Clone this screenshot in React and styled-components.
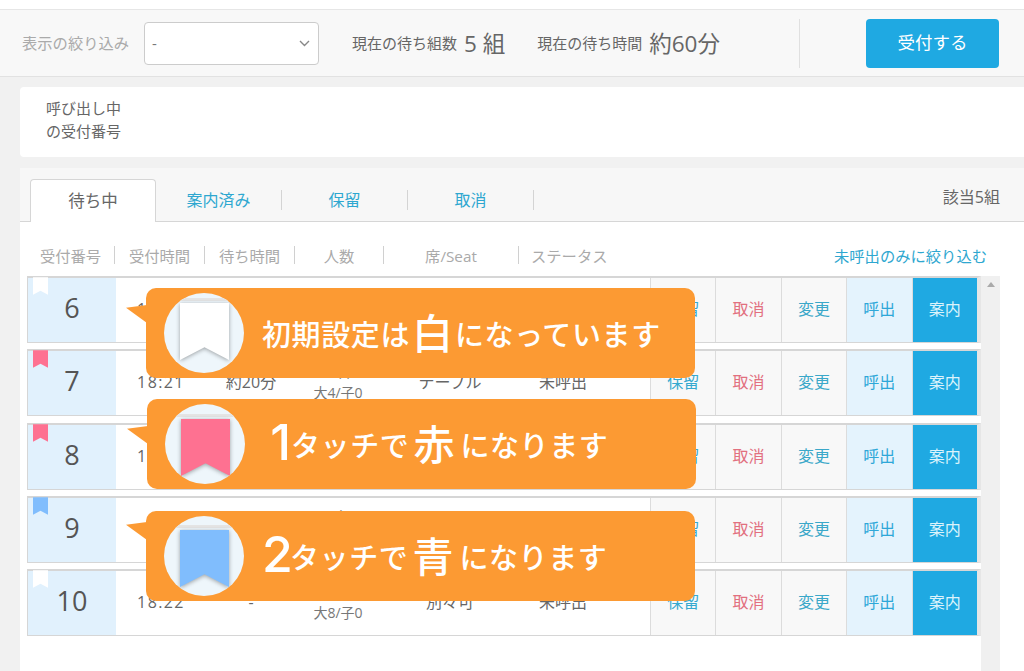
import React from "react";
import styled, { createGlobalStyle } from "styled-components";

const GlobalStyle = createGlobalStyle`
  html, body {
    margin: 0;
    padding: 0;
    background: #fff;
    height: 671px;
    overflow: hidden;
  }
  body {
    font-family: "Open Sans", "Noto Sans CJK JP", sans-serif;
    color: #666;
  }
`;

const Page = styled.div`
  position: relative;
  width: 1024px;
  height: 671px;
  padding-top: 9px;
  box-sizing: border-box;
  display: flex;
  flex-direction: column;
  overflow: hidden;
`;

const Toolbar = styled.div`
  height: 68px;
  flex: none;
  box-sizing: border-box;
  display: flex;
  align-items: center;
  padding-left: 22px;
  background: #f8f8f8;
  border-top: 1px solid #e6e6e6;
  border-bottom: 1px solid #e2e2e2;
`;

const FilterLabel = styled.span`
  font-size: 15.3px;
  color: #aaa;
  width: 122px;
  padding-bottom: 2px;
`;

const Select = styled.div`
  width: 175px;
  height: 43px;
  box-sizing: border-box;
  display: flex;
  align-items: center;
  justify-content: space-between;
  padding: 0 8px 0 7px;
  background: #fff;
  border: 1px solid #ccc;
  border-radius: 4px;
  font-size: 15px;
  color: #777;
`;

const Stat = styled.div`
  display: flex;
  align-items: center;
  margin-left: ${(p) => p.$left}px;
  padding-bottom: 2px;
  font-size: 15px;
  color: #666;
  b {
    font-weight: 400;
    font-size: 22.5px;
    margin-left: 7px;
  }
`;

const Divider = styled.div`
  width: 1px;
  height: 49px;
  background: #e0e0e0;
  margin-left: 79px;
`;

const AcceptButton = styled.button`
  width: 133px;
  height: 49px;
  margin-left: 66px;
  padding: 0 0 3px;
  border: 0;
  border-radius: 4px;
  background: #1fa9e2;
  color: #fff;
  font-family: inherit;
  font-size: 17.5px;
`;

const Body = styled.div`
  flex: 1;
  display: flex;
  flex-direction: column;
  padding: 10px 0 0 20px;
  background: #f1f1f1;
`;

const CallingCard = styled.div`
  height: 70px;
  flex: none;
  box-sizing: border-box;
  padding: 10px 0 0 26px;
  background: #fff;
  border-radius: 4px 0 0 4px;
  font-size: 15px;
  line-height: 22.5px;
  color: #666;
`;

const ListPanel = styled.div`
  flex: 1;
  margin-top: 11px;
  background: #fff;
  display: flex;
  flex-direction: column;
`;

const TabBar = styled.div`
  height: 54px;
  flex: none;
  box-sizing: border-box;
  display: flex;
  align-items: flex-end;
  padding: 0 24px 0 10px;
  background: #f7f7f7;
  border-bottom: 1px solid #d6d6d6;
`;

const ActiveTab = styled.div`
  width: 126px;
  height: 43px;
  box-sizing: border-box;
  margin-bottom: -1px;
  padding-bottom: 3px;
  display: flex;
  align-items: center;
  justify-content: center;
  background: #fff;
  border: 1px solid #d6d6d6;
  border-bottom: 0;
  border-radius: 4px 4px 0 0;
  font-size: 16.5px;
  color: #666;
`;

const Tab = styled.div`
  width: 126px;
  height: 20px;
  margin-bottom: 11px;
  padding-bottom: 3px;
  display: flex;
  align-items: center;
  justify-content: center;
  box-sizing: border-box;
  border-right: 1px solid #d4d4d4;
  font-size: 16px;
  color: #2ea7d0;
`;

const Count = styled.div`
  margin-left: auto;
  margin-bottom: 13px;
  font-size: 16px;
  color: #666;
`;

const HeaderRow = styled.div`
  height: 54px;
  flex: none;
  box-sizing: border-box;
  padding: 24px 37px 0 7px;
  display: flex;
  align-items: flex-start;
`;

const HeadCell = styled.div`
  width: ${(p) => p.$w}px;
  height: 18px;
  flex: none;
  box-sizing: border-box;
  display: flex;
  align-items: center;
  justify-content: ${(p) => (p.$left ? "flex-start" : "center")};
  padding-left: ${(p) => (p.$left ? 12 : 0)}px;
  border-right: ${(p) => (p.$last ? 0 : "1px solid #d0d0d0")};
  font-size: 15.3px;
  color: #aaa;
`;

const FilterLink = styled.div`
  margin-left: auto;
  height: 18px;
  display: flex;
  align-items: center;
  font-size: 15.3px;
  color: #2ea7d0;
`;

const ListArea = styled.div`
  flex: 1;
  display: flex;
  padding-left: 7px;
`;

const Rows = styled.div`
  width: 954px;
  flex: none;
  display: flex;
  flex-direction: column;
  gap: 6.25px;
`;

const Scrollbar = styled.div`
  width: 19px;
  flex: none;
  background: #f0f0f0;
  display: flex;
  justify-content: center;
  padding-top: 6px;
  box-sizing: border-box;
  &::before {
    content: "";
    width: 0;
    height: 0;
    border-left: 4px solid transparent;
    border-right: 4px solid transparent;
    border-bottom: 5px solid #aaa;
  }
`;

const Row = styled.div`
  height: 67px;
  flex: none;
  box-sizing: border-box;
  display: flex;
  border: 1px solid #d6d6d6;
  border-top-width: 2px;
  border-right: 4px solid #e6e6e6;
  background: #fff;
`;

const NumberCell = styled.div`
  position: relative;
  width: 88px;
  flex: none;
  box-sizing: border-box;
  padding-bottom: 5px;
  display: flex;
  align-items: center;
  justify-content: center;
  background: #e1f1fd;
  font-size: 27px;
  color: #555;
`;

const SmallMark = styled.svg`
  position: absolute;
  left: 5px;
  top: -2px;
  width: 15px;
  height: 20px;
`;

const InfoCell = styled.div`
  width: ${(p) => p.$w}px;
  flex: none;
  box-sizing: border-box;
  display: flex;
  flex-direction: column;
  align-items: ${(p) => (p.$left ? "flex-start" : "center")};
  justify-content: center;
  padding-left: ${(p) => (p.$left ? 19 : 0)}px;
  padding-bottom: 2px;
  font-size: 16px;
  line-height: 22px;
  color: #666;
  letter-spacing: ${(p) => (p.$spaced ? "1.4px" : "0")};
  small {
    font-size: 14px;
    color: #777;
  }
`;

const ActionButton = styled.div`
  width: 65.4px;
  flex: none;
  box-sizing: border-box;
  padding-bottom: 4px;
  display: flex;
  align-items: center;
  justify-content: center;
  border-left: 1px solid #dcdcdc;
  background: ${(p) => p.$bg};
  color: ${(p) => p.$color};
  font-size: 16px;
`;

const Callout = styled.div`
  position: absolute;
  left: ${(p) => p.$left}px;
  top: ${(p) => p.$top}px;
  width: 549px;
  height: 90px;
  box-sizing: border-box;
  padding-left: 18px;
  display: flex;
  align-items: center;
  background: #fc9a33;
  border-radius: 10px;
  color: #fff;
  font-family: "Noto Sans CJK JP", sans-serif;
  font-weight: 500;
  font-size: 29px;
  letter-spacing: 0.6px;
  white-space: nowrap;
  &::before {
    content: "";
    position: absolute;
    left: -20px;
    top: ${(p) => p.$tail}px;
    width: 21px;
    height: 18px;
    background: #fc9a33;
    clip-path: polygon(0 15%, 100% 0, 100% 100%);
  }
`;

const Circle = styled.div`
  position: relative;
  width: 80px;
  height: 80px;
  flex: none;
  overflow: hidden;
  border-radius: 50%;
  background: #eef6fb;
  display: flex;
  justify-content: center;
  padding-top: ${(p) => p.$top}px;
  box-sizing: border-box;
  margin-right: 18px;
  &::before {
    content: "";
    position: absolute;
    left: 0;
    right: 0;
    top: ${(p) => p.$top - 5}px;
    height: 3px;
    background: #e4e4e4;
  }
`;

const BigMark = styled.svg`
  position: relative;
  width: 49px;
  height: 57px;
  overflow: visible;
  filter: drop-shadow(0 1px 2px rgba(0, 0, 0, 0.35));
`;

const BigChar = styled.span`
  font-size: 41px;
  line-height: 1;
  margin: ${(p) => p.$margin};
  letter-spacing: 0;
  position: relative;
  top: -2px;
`;

const Digit = styled.span`
  width: 28px;
  flex: none;
  font-family: "Inter", sans-serif;
  font-weight: 500;
  font-size: 50px;
  line-height: 1;
  letter-spacing: 0;
  text-align: right;
  position: relative;
  top: -2px;
`;

const rows = [
  { no: 6, mark: "#ffffff", time: "18:20", wait: "約25分", count: "5名", detail: "大5/子0", seat: "テーブル" },
  { no: 7, mark: "#fe7191", time: "18:21", wait: "約20分", count: "4名", detail: "大4/子0", seat: "テーブル" },
  { no: 8, mark: "#fe7191", time: "18:21", wait: "約15分", count: "3名", detail: "大3/子0", seat: "テーブル" },
  { no: 9, mark: "#80bdfd", time: "18:22", wait: "約10分", count: "2名", detail: "大2/子0", seat: "テーブル" },
  { no: 10, mark: "#ffffff", time: "18:22", wait: "-", count: "8名", detail: "大8/子0", seat: "別々可" },
];

const heads = [
  { label: "受付番号", w: 88 },
  { label: "受付時間", w: 90 },
  { label: "待ち時間", w: 90 },
  { label: "人数", w: 89 },
  { label: "席/Seat", w: 135 },
  { label: "ステータス", w: 100, left: true, last: true },
];

const actions = [
  { label: "保留", bg: "#f8f8f8", color: "#35a9cf" },
  { label: "取消", bg: "#f8f8f8", color: "#e2707f" },
  { label: "変更", bg: "#f8f8f8", color: "#3ba8c9" },
  { label: "呼出", bg: "#e4f3fd", color: "#2ea7d8" },
  { label: "案内", bg: "#1fa9e2", color: "#dcf3fb" },
];

const Chevron = () => (
  <svg width="11" height="7" viewBox="0 0 11 7" fill="none">
    <path d="M1 1 5.5 5.5 10 1" stroke="#888" strokeWidth="1.4" />
  </svg>
);

const App = () => {
  return (
    <Page>
      <GlobalStyle />
      <Toolbar>
        <FilterLabel>表示の絞り込み</FilterLabel>
        <Select>
          -
          <Chevron />
        </Select>
        <Stat $left={33}>
          現在の待ち組数<b>5 組</b>
        </Stat>
        <Stat $left={32}>
          現在の待ち時間<b>約60分</b>
        </Stat>
        <Divider />
        <AcceptButton>受付する</AcceptButton>
      </Toolbar>
      <Body>
        <CallingCard>
          呼び出し中
          <br />
          の受付番号
        </CallingCard>
        <ListPanel>
          <TabBar>
            <ActiveTab>待ち中</ActiveTab>
            <Tab>案内済み</Tab>
            <Tab>保留</Tab>
            <Tab>取消</Tab>
            <Count>該当5組</Count>
          </TabBar>
          <HeaderRow>
            {heads.map((h) => (
              <HeadCell key={h.label} $w={h.w} $left={h.left} $last={h.last}>
                {h.label}
              </HeadCell>
            ))}
            <FilterLink>未呼出のみに絞り込む</FilterLink>
          </HeaderRow>
          <ListArea>
            <Rows>
              {rows.map((r) => (
                <Row key={r.no}>
                  <NumberCell>
                    <SmallMark viewBox="0 0 50 58">
                      <path d="M0 0H50V58L25 45 0 58Z" fill={r.mark} />
                    </SmallMark>
                    {r.no}
                  </NumberCell>
                  <InfoCell $w={90} $spaced>{r.time}</InfoCell>
                  <InfoCell $w={90}>{r.wait}</InfoCell>
                  <InfoCell $w={84}>
                    {r.count}
                    <small>{r.detail}</small>
                  </InfoCell>
                  <InfoCell $w={140}>{r.seat}</InfoCell>
                  <InfoCell $w={130} $left>
                    未呼出
                  </InfoCell>
                  {actions.map((a) => (
                    <ActionButton key={a.label} $bg={a.bg} $color={a.color}>
                      {a.label}
                    </ActionButton>
                  ))}
                </Row>
              ))}
            </Rows>
            <Scrollbar />
          </ListArea>
        </ListPanel>
      </Body>

      <Callout $left={146} $top={288} $tail={17}>
        <Circle $top={10}>
          <BigMark viewBox="0 0 50 58">
            <path d="M0 0H50V58L25 45 0 58Z" fill="#ffffff" />
          </BigMark>
        </Circle>
        初期設定は<BigChar $margin="0 2px">白</BigChar>になっています
      </Callout>
      <Callout $left={147} $top={399} $tail={27}>
        <Circle $top={15}>
          <BigMark viewBox="0 0 50 58">
            <path d="M0 0H50V58L25 45 0 58Z" fill="#fe7191" />
          </BigMark>
        </Circle>
        <Digit>1</Digit>タッチで<BigChar $margin="0 6px 0 4px">赤</BigChar>になります
      </Callout>
      <Callout $left={146} $top={511} $tail={11}>
        <Circle $top={14}>
          <BigMark viewBox="0 0 50 58">
            <path d="M0 0H50V58L25 45 0 58Z" fill="#80bdfd" />
          </BigMark>
        </Circle>
        <Digit>2</Digit>タッチで<BigChar $margin="0 6px 0 4px">青</BigChar>になります
      </Callout>
    </Page>
  );
};

export default App;
